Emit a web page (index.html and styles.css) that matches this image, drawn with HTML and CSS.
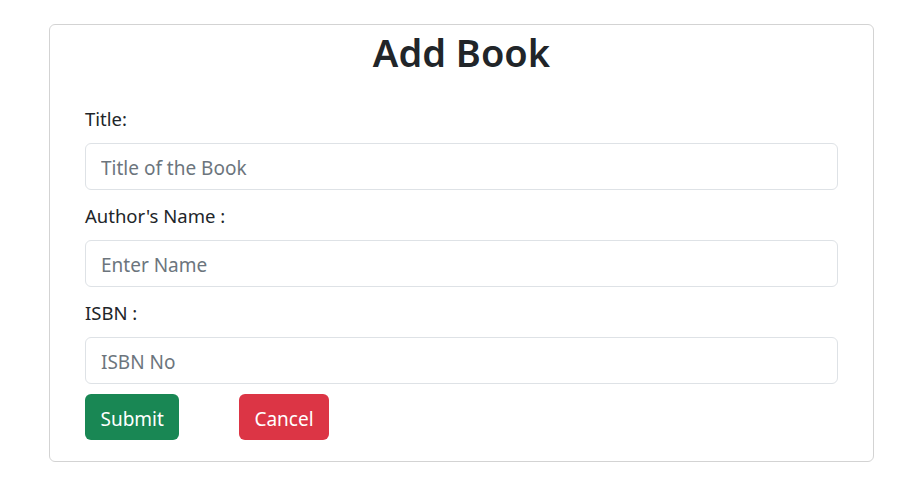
FILE: index.html
```html
<!DOCTYPE html>
<html>
<head>
<meta charset="utf-8">
<link rel="stylesheet" href="styles.css">
</head>
<body>
<div class="card">
  <h1 class="heading">Add Book</h1>
  <form class="form">
    <label class="label">Title:</label>
    <input class="input" type="text" placeholder="Title of the Book">
    <label class="label">Author's Name :</label>
    <input class="input" type="text" placeholder="Enter Name">
    <label class="label">ISBN :</label>
    <input class="input input-last" type="text" placeholder="ISBN No">
    <div class="actions">
      <button type="button" class="btn btn-submit">Submit</button>
      <button type="button" class="btn btn-cancel">Cancel</button>
    </div>
  </form>
</div>
</body>
</html>
```
FILE: styles.css
```css
* { box-sizing: border-box; }
body {
  margin: 0;
  padding: 24px 46px 0 49px;
  font-family: "Noto Sans", "Open Sans", sans-serif;
  color: #212529;
  background: #fff;
}
.card {
  border: 1px solid #d3d3d3;
  border-radius: 6px;
  padding: 0 35px 20px 35px;
  height: 438px;
}
.heading {
  margin: 0;
  padding-top: 4px;
  text-align: center;
  font-size: 38px;
  font-weight: 600;
  line-height: 46px;
}
.form {
  display: flex;
  flex-direction: column;
  margin-top: 29px;
}
.label {
  font-size: 18.5px;
  line-height: 28px;
  margin-bottom: 10px;
  padding-top: 1px;
}
.input {
  height: 47px;
  border: 1px solid #dee2e6;
  border-radius: 6px;
  padding: 2px 15px 0;
  font-family: inherit;
  font-size: 19px;
  color: #212529;
  margin-bottom: 11px;
}
.input-last { margin-bottom: 10px; }
.input::placeholder { color: #6c757d; }
.actions {
  display: flex;
  gap: 60px;
}
.btn {
  height: 46px;
  border: none;
  border-radius: 6px;
  padding: 3px 15px 0;
  font-family: inherit;
  font-size: 19px;
  color: #fff;
}
.btn-submit { background: #198754; padding: 3px 15.5px 0; }
.btn-cancel { background: #dc3545; }
```
